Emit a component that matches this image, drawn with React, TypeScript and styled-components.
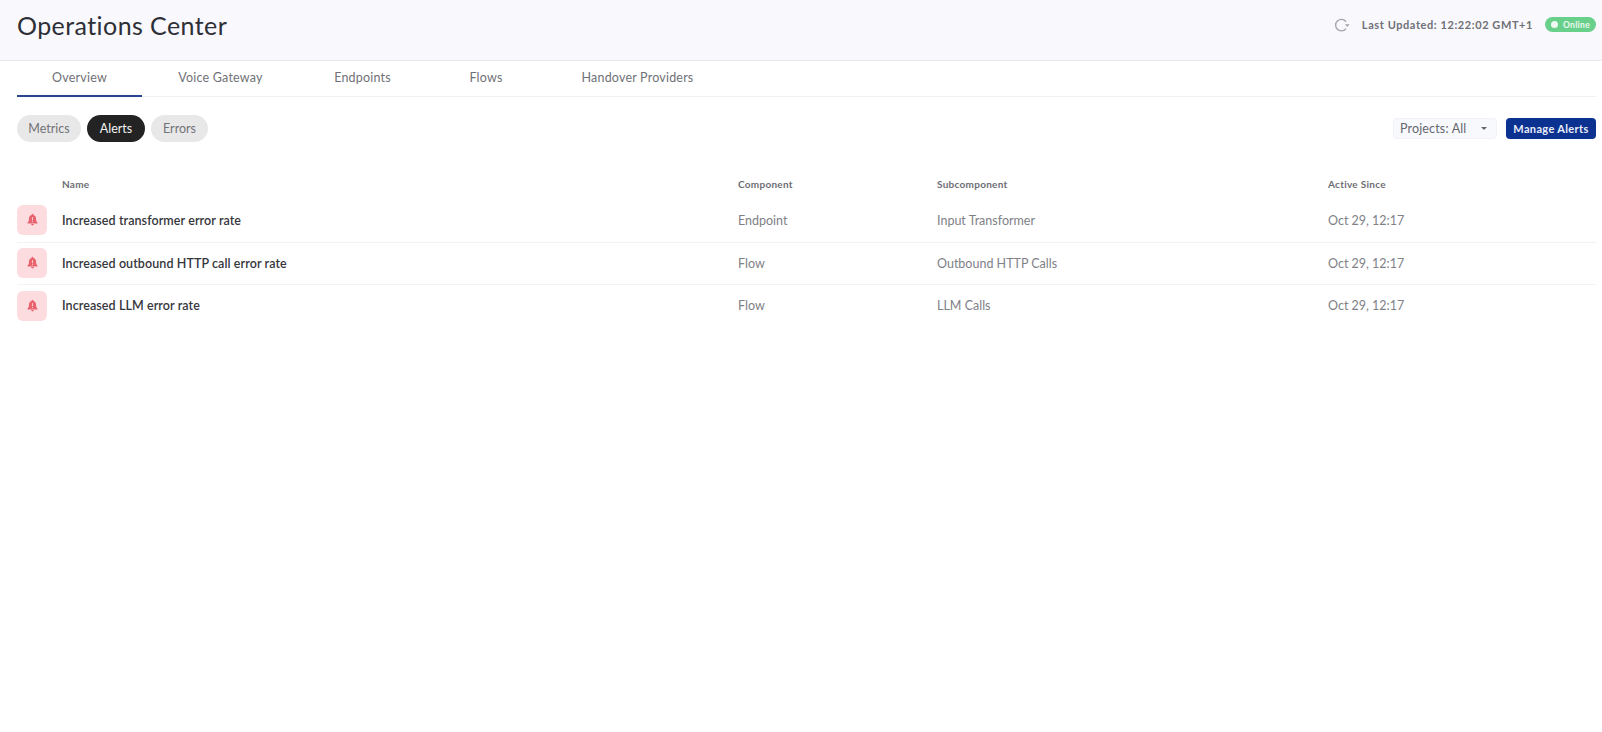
import styled, { createGlobalStyle } from "styled-components";

const GlobalStyle = createGlobalStyle`
  html, body {
    margin: 0;
    padding: 0;
    background: #fff;
    font-family: "Lato", "Open Sans", sans-serif;
    color: #2f3036;
  }
`;

const Page = styled.main`
  width: 1602px;
  height: 732px;
  overflow: hidden;
`;

const Header = styled.header`
  display: flex;
  align-items: center;
  justify-content: space-between;
  box-sizing: border-box;
  height: 61px;
  padding: 0 6px 11px 17px;
  background: #f8f8fd;
  border-bottom: 1px solid #e8eaf2;
`;

const Title = styled.h1`
  margin: 0;
  font-size: 25px;
  line-height: 34px;
  font-weight: 400;
  letter-spacing: 0.42px;
  color: #2e2f36;
`;

const Status = styled.div`
  display: flex;
  align-items: center;
`;

const Refresh = styled.span`
  display: flex;
  margin-right: 12px;
  color: #a3a4aa;
`;

const Updated = styled.span`
  font-size: 11px;
  font-weight: 700;
  letter-spacing: 0.58px;
  color: #6f7076;
  margin-right: 12px;
`;

const Online = styled.span`
  display: flex;
  align-items: center;
  gap: 5px;
  box-sizing: border-box;
  width: 51px;
  height: 15px;
  padding-left: 6px;
  border-radius: 8px;
  background: #69d08c;
  color: #eef9f1;
  font-size: 8.5px;
  font-weight: 700;
  letter-spacing: 0.3px;
`;

const Dot = styled.i`
  width: 7px;
  height: 7px;
  border-radius: 50%;
  background: #eef9f1;
`;

const Tabs = styled.nav`
  display: flex;
  box-sizing: border-box;
  height: 36px;
  margin: 0 6px 0 17px;
  border-bottom: 1px solid #f0f0f4;
`;

const Tab = styled.div<{ $active?: boolean; $width: number }>`
  display: flex;
  align-items: center;
  justify-content: center;
  box-sizing: border-box;
  width: ${(p) => p.$width}px;
  height: 36px;
  padding-bottom: 2px;
  font-size: 12.5px;
  letter-spacing: 0.2px;
  color: #707177;
  border-bottom: 2px solid ${(p) => (p.$active ? "#27468f" : "transparent")};
`;

const Toolbar = styled.div`
  display: flex;
  align-items: center;
  justify-content: space-between;
  height: 27px;
  margin: 18px 6px 0 17px;
`;

const Pills = styled.div`
  display: flex;
  gap: 6px;
`;

const Pill = styled.div<{ $active?: boolean; $width: number }>`
  display: flex;
  align-items: center;
  justify-content: center;
  width: ${(p) => p.$width}px;
  height: 27px;
  border-radius: 14px;
  font-size: 12.5px;
  background: ${(p) => (p.$active ? "#232323" : "#e8e8e9")};
  color: ${(p) => (p.$active ? "#f2f2f2" : "#727377")};
`;

const Actions = styled.div`
  display: flex;
  align-items: center;
  gap: 9px;
`;

const Select = styled.div`
  display: flex;
  align-items: center;
  justify-content: space-between;
  box-sizing: border-box;
  width: 104px;
  height: 21px;
  padding: 0 9px 0 6px;
  border-radius: 4px;
  background: #f8f9fd;
  border: 1px solid #f1f2f8;
  font-size: 12.5px;
  letter-spacing: 0.15px;
  color: #66676e;
`;

const Caret = styled.i`
  width: 0;
  height: 0;
  border-left: 3px solid transparent;
  border-right: 3px solid transparent;
  border-top: 3px solid #66676e;
`;

const ManageButton = styled.button`
  width: 90px;
  height: 21px;
  padding: 0;
  border: 0;
  border-radius: 4px;
  background: #0b3191;
  color: #e9edf8;
  font-family: inherit;
  font-size: 11px;
  font-weight: 700;
  letter-spacing: 0.35px;
`;

const Table = styled.section`
  margin: 27px 6px 0 17px;
`;

const Row = styled.div`
  display: grid;
  grid-template-columns: 45px 676px 199px 391px 1fr;
  align-items: center;
  box-sizing: border-box;
  height: 42.5px;
  & + & {
    border-top: 1px solid #f1f1f6;
  }
`;

const HeadRow = styled.div`
  display: grid;
  grid-template-columns: 45px 676px 199px 391px 1fr;
  align-items: center;
  height: 30px;
  font-size: 10px;
  font-weight: 700;
  letter-spacing: 0.27px;
  color: #6d6e74;
`;

const IconBox = styled.div`
  display: flex;
  align-items: center;
  justify-content: center;
  width: 30px;
  height: 30px;
  border-radius: 6px;
  background: #fddcdf;
  color: #e8636d;
`;

const Name = styled.div`
  font-size: 12.5px;
  font-weight: 600;
  letter-spacing: 0.08px;
  color: #35363c;
`;

const Cell = styled.div`
  font-size: 12.5px;
  color: #808187;
`;

const RefreshIcon = () => (
  <svg width="17" height="16" viewBox="0 0 17 16" fill="none" stroke="currentColor" strokeWidth="1.3">
    <path d="M12.700 4.200A5.800 5.800 0 1 0 12.700 12" strokeLinecap="round" />
    <path d="M12 7.200h4.600l-2.300 2.800z" fill="currentColor" stroke="none" />
  </svg>
);

const BellIcon = () => (
  <svg width="13" height="14" viewBox="0 0 12 13" fill="currentColor">
    <path d="M6 .7c.5 0 .8.3.8.8v.4C8.500 2.300 9.300 3.600 9.300 5.400c0 1.700.3 2.600 1.300 3.400v1H1.400v-1c1-.8 1.300-1.700 1.300-3.400 0-1.800.8-3.100 2.500-3.500v-.4c0-.5.3-.8.8-.8z" />
    <path d="M4.700 10.300h2.600c-.1.8-.6 1.300-1.300 1.300s-1.200-.5-1.300-1.300z" />
    <rect x="5.500" y="3.800" width="1" height="3" fill="#fbc4c8" />
    <rect x="5.500" y="7.500" width="1" height="1" fill="#fbc4c8" />
  </svg>
);

const alerts = [
  { name: "Increased transformer error rate", component: "Endpoint", sub: "Input Transformer" },
  { name: "Increased outbound HTTP call error rate", component: "Flow", sub: "Outbound HTTP Calls" },
  { name: "Increased LLM error rate", component: "Flow", sub: "LLM Calls" },
];

const tabs = [
  { label: "Overview", width: 125 },
  { label: "Voice Gateway", width: 157 },
  { label: "Endpoints", width: 127 },
  { label: "Flows", width: 120 },
  { label: "Handover Providers", width: 183 },
];

function App() {
  return (
    <Page>
      <GlobalStyle />
      <Header>
        <Title>Operations Center</Title>
        <Status>
          <Refresh>
            <RefreshIcon />
          </Refresh>
          <Updated>Last Updated: 12:22:02 GMT+1</Updated>
          <Online>
            <Dot />
            Online
          </Online>
        </Status>
      </Header>
      <Tabs>
        {tabs.map((tab, i) => (
          <Tab key={tab.label} $active={i === 0} $width={tab.width}>
            {tab.label}
          </Tab>
        ))}
      </Tabs>
      <Toolbar>
        <Pills>
          <Pill $width={64}>Metrics</Pill>
          <Pill $width={58} $active>
            Alerts
          </Pill>
          <Pill $width={57}>Errors</Pill>
        </Pills>
        <Actions>
          <Select>
            Projects: All
            <Caret />
          </Select>
          <ManageButton>Manage Alerts</ManageButton>
        </Actions>
      </Toolbar>
      <Table>
        <HeadRow>
          <span />
          <span>Name</span>
          <span>Component</span>
          <span>Subcomponent</span>
          <span>Active Since</span>
        </HeadRow>
        {alerts.map((alert) => (
          <Row key={alert.name}>
            <IconBox>
              <BellIcon />
            </IconBox>
            <Name>{alert.name}</Name>
            <Cell>{alert.component}</Cell>
            <Cell>{alert.sub}</Cell>
            <Cell>Oct 29, 12:17</Cell>
          </Row>
        ))}
      </Table>
    </Page>
  );
}

export default App;
